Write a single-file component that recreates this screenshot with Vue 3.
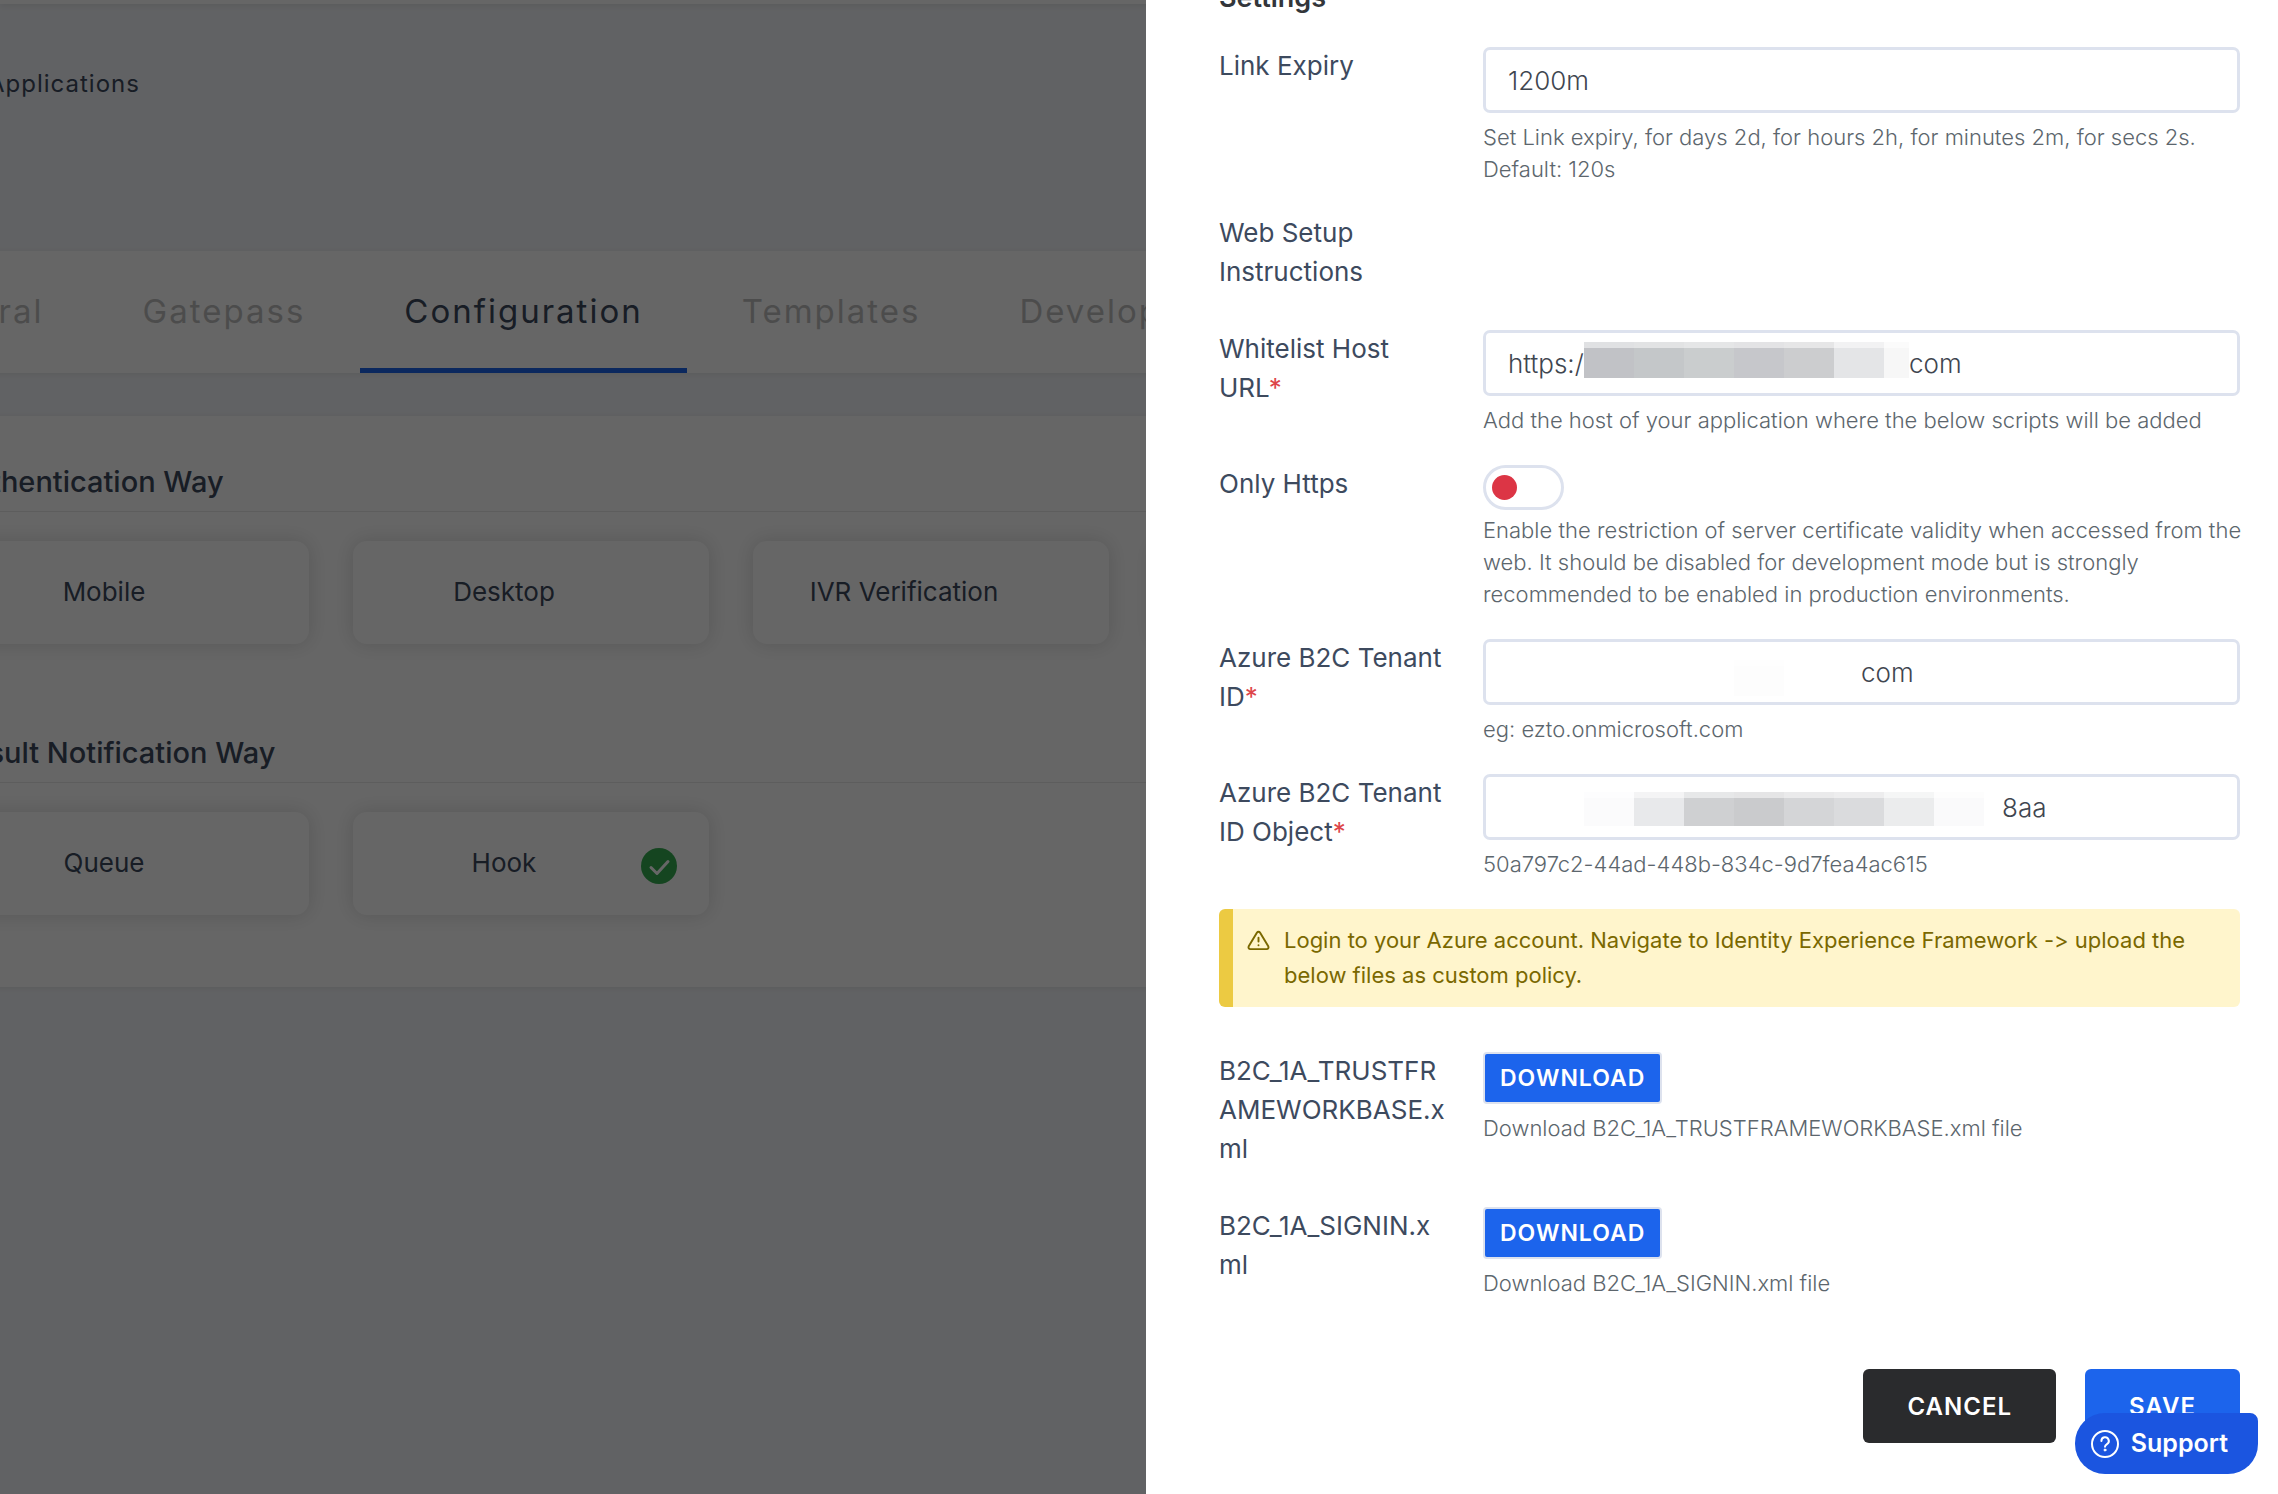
<script setup>
import { ref } from 'vue'

const tabs = ['General', 'Gatepass', 'Configuration', 'Templates', 'Developer']
const activeTab = ref('Configuration')

const sections = [
  {
    title: 'Authentication Way',
    cards: [{ name: 'Mobile' }, { name: 'Desktop' }, { name: 'IVR Verification' }, { name: 'Web' }],
  },
  {
    title: 'Result Notification Way',
    cards: [{ name: 'Queue' }, { name: 'Hook', selected: true }],
  },
]

const linkExpiry = ref('1200m')
const onlyHttps = ref(false)

const maskedFields = {
  host: {
    prefix: 'https:/',
    mask: ['#c1c2c6', '#c4c7c9', '#cacdce', '#c6c7cb', '#cccdcf', '#e4e5e7', '#f7f7f7'],
    suffix: ref('com'),
  },
  tenant: {
    prefix: '',
    mask: ['#fff', '#fff', '#fff', '#fdfdfd', '#fff'],
    suffix: ref('com'),
  },
  object: {
    prefix: '',
    mask: ['#fbfbfc', '#e8e9eb', '#cfd0d2', '#cacbcd', '#d4d5d7', '#dadbdd', '#ebeced', '#fafafb'],
    suffix: ref('8aa'),
  },
}
const { host, tenant, object } = maskedFields
const hostSuffix = host.suffix
const tenantSuffix = tenant.suffix
const objectSuffix = object.suffix

const downloads = ['B2C_1A_TRUSTFRAMEWORKBASE.xml', 'B2C_1A_SIGNIN.xml']
</script>

<template>
  <div class="app">
    <div class="page">
      <header class="topbar"></header>
      <nav class="breadcrumb" aria-label="Breadcrumb"><a href="#">Applications</a></nav>
      <div class="tabs" role="tablist">
        <button
          v-for="tab in tabs"
          :key="tab"
          type="button"
          role="tab"
          class="tab"
          :class="{ active: tab === activeTab }"
          @click="activeTab = tab"
        >{{ tab }}</button>
      </div>
      <main class="panel">
        <section v-for="section in sections" :key="section.title" class="section">
          <h2 class="section-title">{{ section.title }}</h2>
          <div class="cards">
            <button v-for="card in section.cards" :key="card.name" type="button" class="card">
              <span class="card-name">{{ card.name }}</span>
              <span class="card-mark">
                <svg v-if="card.selected" viewBox="0 0 36 36" width="36" height="36" aria-hidden="true">
                  <circle cx="18" cy="18" r="18" fill="#35ac52" />
                  <path d="M10 19.5l6 6 11-12" fill="none" stroke="#fff" stroke-width="3" stroke-linecap="round" stroke-linejoin="round" />
                </svg>
              </span>
            </button>
          </div>
        </section>
      </main>
    </div>

    <div class="overlay"></div>

    <aside class="drawer">
      <h3 class="heading">Settings</h3>

      <div class="row">
        <label class="label" for="expiry">Link Expiry</label>
        <div class="field">
          <div class="control"><input id="expiry" v-model="linkExpiry" type="text" class="text" /></div>
          <p class="help">Set Link expiry, for days 2d, for hours 2h, for minutes 2m, for secs 2s. Default: 120s</p>
        </div>
      </div>

      <div class="row">
        <div class="label">Web Setup Instructions</div>
      </div>

      <div class="row">
        <label class="label" for="host">Whitelist Host URL<span class="required">*</span></label>
        <div class="field">
          <div class="control">
            <span class="prefix">{{ host.prefix }}</span>
            <span class="mask">
              <i v-for="(color, i) in host.mask" :key="i" class="block" :style="{ backgroundColor: color }"></i>
            </span>
            <input id="host" v-model="hostSuffix" type="text" class="text" />
          </div>
          <p class="help">Add the host of your application where the below scripts will be added</p>
        </div>
      </div>

      <div class="row">
        <label class="label" for="https">Only Https</label>
        <div class="field">
          <input id="https" v-model="onlyHttps" type="checkbox" class="toggle" />
          <p class="help toggle-help">Enable the restriction of server certificate validity when accessed from the web. It should be disabled for development mode but is strongly recommended to be enabled in production environments.</p>
        </div>
      </div>

      <div class="row">
        <label class="label" for="tenant">Azure B2C Tenant ID<span class="required">*</span></label>
        <div class="field">
          <div class="control">
            <span class="prefix">{{ tenant.prefix }}</span>
            <span class="mask blank">
              <i v-for="(color, i) in tenant.mask" :key="i" class="block" :style="{ backgroundColor: color }"></i>
            </span>
            <input id="tenant" v-model="tenantSuffix" type="text" class="text" />
          </div>
          <p class="help">eg: ezto.onmicrosoft.com</p>
        </div>
      </div>

      <div class="row">
        <label class="label" for="object">Azure B2C Tenant ID Object<span class="required">*</span></label>
        <div class="field">
          <div class="control">
            <span class="prefix">{{ object.prefix }}</span>
            <span class="mask wide">
              <i v-for="(color, i) in object.mask" :key="i" class="block" :style="{ backgroundColor: color }"></i>
            </span>
            <input id="object" v-model="objectSuffix" type="text" class="text" />
          </div>
          <p class="help">50a797c2-44ad-448b-834c-9d7fea4ac615</p>
        </div>
      </div>

      <div class="alert" role="alert">
        <svg class="alert-icon" viewBox="0 0 24 24" width="23" height="23" fill="none" stroke="currentColor" stroke-width="2" stroke-linecap="round" stroke-linejoin="round" aria-hidden="true">
          <path d="M10.3 3.9 1.8 18a2 2 0 0 0 1.7 3h17a2 2 0 0 0 1.7-3L13.7 3.9a2 2 0 0 0-3.4 0z" />
          <path d="M12 9v4M12 17v.01" />
        </svg>
        <p class="alert-text">Login to your Azure account. Navigate to Identity Experience Framework -&gt; upload the below files as custom policy.</p>
      </div>

      <div v-for="(file, i) in downloads" :key="file" class="row">
        <label class="label" :for="'download-' + i">{{ file }}</label>
        <div class="field">
          <button :id="'download-' + i" type="button" class="download">DOWNLOAD</button>
          <p class="help">Download {{ file }} file</p>
        </div>
      </div>

      <footer class="actions">
        <button type="button" class="action cancel">CANCEL</button>
        <button type="button" class="action save">SAVE</button>
      </footer>
    </aside>

    <button type="button" class="support">
      <svg viewBox="0 0 30 30" width="30" height="30" fill="none" stroke="currentColor" stroke-width="2" stroke-linecap="round" aria-hidden="true">
        <circle cx="15" cy="15" r="13" />
        <path d="M11.4 12a3.7 3.7 0 1 1 5.6 3.1c-1.3.8-2 1.300-2 2.700" />
        <circle cx="15" cy="21" r="1" fill="currentColor" stroke-width="1" />
      </svg>
      <span>Support</span>
    </button>
  </div>
</template>

<style>
body {
  overflow: hidden;
}
</style>

<style scoped>
* {
  box-sizing: border-box;
}

.app {
  position: relative;
  height: 100vh;
  overflow: hidden;
  background: #f3f5f9;
  font-family: Inter, "Liberation Sans", sans-serif;
  font-size: 26px;
  line-height: 39px;
  color: #3d4a5e;
  font-variant-ligatures: no-contextual;
}

button,
input {
  font: inherit;
  color: inherit;
}

button {
  border: 0;
  cursor: pointer;
}

.topbar {
  height: 4px;
  background: #fff;
  box-shadow: 0 1px 6px rgba(0, 0, 0, 0.12);
}

.breadcrumb {
  height: 247px;
  margin-left: -12px;
  padding-top: 60px;
  font-size: 24px;
  letter-spacing: 1px;
}

.breadcrumb a {
  color: inherit;
  text-decoration: none;
}

.tabs {
  display: flex;
  gap: 11px;
  margin-left: -136px;
  height: 122px;
  background: #fff;
  box-shadow: 0 1px 6px rgba(0, 0, 0, 0.08);
}

.tab {
  flex: none;
  padding: 4px 44px 0;
  border-bottom: 5px solid transparent;
  background: none;
  font-size: 33px;
  letter-spacing: 2px;
  color: #bfbfbf;
}

.tab.active {
  border-color: #1c64ec;
  color: #3d4a5e;
}

.panel {
  margin-top: 43px;
  margin-left: -47px;
  padding-top: 44px;
  padding-bottom: 72px;
  background: #fff;
  box-shadow: 0 1px 6px rgba(0, 0, 0, 0.08);
}

.section + .section {
  margin-top: 87px;
}

.section-title {
  margin: 0 0 29px;
  padding-bottom: 8px;
  border-bottom: 1px solid #e8e8e8;
  font-size: 29px;
  font-weight: 500;
  line-height: 43px;
}

.cards {
  display: flex;
  gap: 44px;
}

.card {
  display: flex;
  flex: none;
  align-items: center;
  width: 356px;
  height: 103px;
  padding: 0 32px 2px 0;
  border-radius: 14px;
  background: #fff;
  box-shadow: 0 0 20px rgba(0, 0, 0, 0.15);
}

.card-name {
  flex: 1;
  padding-left: 14px;
  text-align: center;
}

.card-mark {
  display: flex;
  width: 36px;
  padding-top: 6px;
}

.overlay {
  position: absolute;
  inset: 0;
  background: rgba(0, 0, 0, 0.6);
}

.drawer {
  position: absolute;
  top: 0;
  right: 0;
  bottom: 0;
  left: 1146px;
  padding: 0 38px 0 73px;
  background: #fff;
}

.heading {
  margin: -22px 0 29px;
  font-size: 27px;
  font-weight: 600;
  color: #33363b;
}

.row {
  display: grid;
  grid-template-columns: 226px minmax(0, 1fr);
  column-gap: 38px;
  margin-bottom: 28px;
}

.label {
  padding-bottom: 10px;
  word-break: break-word;
}

.required {
  color: #dd4549;
}

.field {
  padding-top: 1px;
}

.control {
  display: flex;
  align-items: center;
  height: 66px;
  padding: 0 22px;
  border: 3px solid #dde2ee;
  border-radius: 7px;
  background: #fff;
  font-weight: 300;
  color: #3f4650;
}

.text {
  flex: 1;
  min-width: 0;
  height: 60px;
  padding: 0;
  border: 0;
  background: none;
  outline: 0;
}

.prefix {
  flex: none;
  width: 76px;
}

.mask {
  display: flex;
  flex: none;
  width: 325px;
  height: 36px;
  margin-bottom: 6px;
  overflow: hidden;
}

.mask.blank {
  width: 277px;
  margin: 12px 0 0;
}

.mask.wide {
  width: 418px;
  height: 34px;
  margin: 3px 0 0;
}

.block {
  flex: none;
  width: 50px;
  border-top: 6px solid rgba(255, 255, 255, 0.5);
}

.help {
  margin: 8px -12px 0 0;
  font-size: 22px;
  font-weight: 300;
  line-height: 32px;
  color: #5c666d;
}

.toggle {
  display: flex;
  align-items: center;
  appearance: none;
  width: 81px;
  height: 45px;
  margin: 0;
  padding: 0 6px;
  border: 3px solid #dde2ee;
  border-radius: 23px;
  background: #fff;
}

.toggle::before {
  content: "";
  width: 25px;
  height: 25px;
  border-radius: 50%;
  background: #dc3545;
}

.toggle:checked::before {
  margin-left: auto;
  background: #1c64ec;
}

.toggle-help {
  margin-top: 4px;
}

.alert {
  display: flex;
  gap: 14px;
  margin: 29px 0 44px;
  padding: 14px 28px 14px 14px;
  border-left: 14px solid #ecca42;
  border-radius: 6px;
  background: #fff5cc;
  font-size: 22px;
  line-height: 35px;
  color: #7a6800;
}

.alert-icon {
  flex: none;
  margin-top: 6px;
}

.alert-text {
  margin: 0;
}

.download {
  display: block;
  height: 52px;
  padding: 0 15px;
  border: 2px solid #dde2ee;
  border-radius: 4px;
  background: #1c64ec;
  font-size: 23px;
  font-weight: 600;
  letter-spacing: 1px;
  color: #fff;
}

.actions {
  display: flex;
  justify-content: flex-end;
  gap: 29px;
  margin-top: 70px;
}

.action {
  height: 74px;
  padding: 0 44px;
  border-radius: 6px;
  font-size: 24px;
  font-weight: 600;
  letter-spacing: 1px;
  color: #fff;
}

.cancel {
  background: #2a2b2d;
}

.save {
  background: #1c64ec;
}

.support {
  position: absolute;
  right: 20px;
  bottom: 20px;
  display: flex;
  align-items: center;
  gap: 11px;
  height: 61px;
  padding: 0 30px 0 15px;
  border-radius: 30px 8px 30px 30px;
  background: #1b55e0;
  font-size: 25px;
  font-weight: 600;
  color: #fff;
}
</style>
